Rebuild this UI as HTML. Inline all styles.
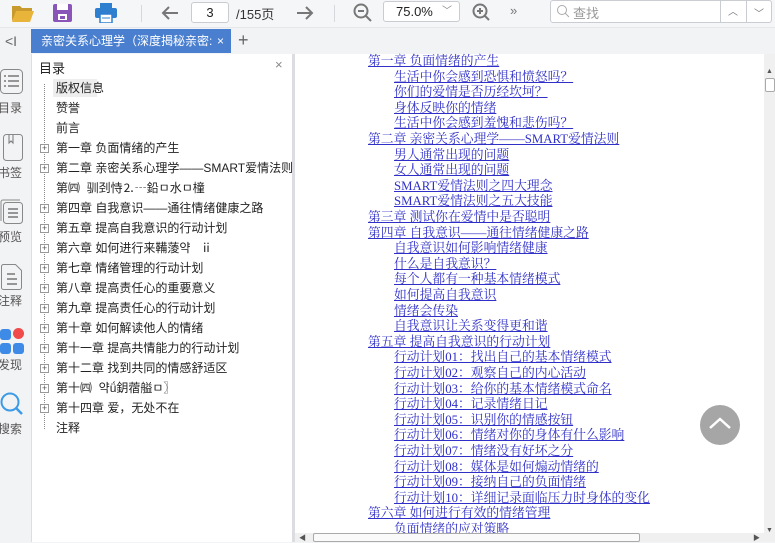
<!DOCTYPE html>
<html><head><meta charset="utf-8"><style>
*{margin:0;padding:0;box-sizing:border-box}
body{width:775px;height:542px;overflow:hidden;background:#f2f3f5;font-family:"Liberation Sans","Noto Sans CJK SC",sans-serif;position:relative;font-size:12px;color:#222}
.abs{position:absolute}
.toolbar{left:0;top:0;width:775px;height:27px;background:#f5f6f8}
.tabbar{left:0;top:27px;width:775px;height:27px;background:#f2f3f5;border-top:1px solid #e4e6ea}
.tab{left:31px;top:29px;width:200px;height:24px;background:#4a7fd0;color:#fff;font-size:12px;line-height:24px;padding-left:10px;white-space:nowrap;overflow:hidden}
.rail{left:0;top:54px;width:30px;height:488px;background:#f2f3f5}
.rail .lbl{position:absolute;left:-2px;font-size:12px;color:#555;white-space:nowrap}
.toc{left:31px;top:54px;width:261px;height:488px;background:#fff;border-left:1px solid #dcdee2}
.toc .it{position:absolute;left:24px;font-size:12px;color:#222;white-space:nowrap;line-height:16px}
.plus{position:absolute;left:8px;width:9px;height:9px;border:1px solid #999;font-size:9px;line-height:7px;text-align:center;color:#555;background:#fff}
.sep{left:292px;top:54px;width:3px;height:488px;background:#dcdde0}
.content{left:295px;top:54px;width:469px;height:479px;background:#fff}
.ln{position:absolute;font-family:"Liberation Serif","Noto Serif CJK SC",serif;font-size:12.8px;color:#3030c8;text-decoration:underline;white-space:nowrap;line-height:15px}
.vs{left:764px;top:54px;width:11px;height:488px;background:#f0f0f0}
.hs{left:295px;top:533px;width:469px;height:9px;background:#f0f0f0}
</style></head><body>
<div class="abs toolbar"></div>
<svg class="abs" style="left:11px;top:3px" width="24" height="20"><path d="M1 3h8l2 2h10v3H6L1 18z" fill="#c99a2e"/><path d="M5 8h18l-4 11H1z" fill="#e8b43a"/></svg>
<svg class="abs" style="left:53px;top:4px" width="19" height="18"><rect x="0" y="0" width="19" height="18" rx="2" fill="#8a55b8"/><rect x="4" y="0" width="11" height="6" fill="#fff"/><rect x="5" y="10" width="9" height="6" fill="#fff"/><rect x="7" y="12" width="5" height="3" fill="#8a55b8"/></svg>
<svg class="abs" style="left:95px;top:3px" width="22" height="20"><rect x="5" y="0" width="12" height="5" fill="#2f7fd0"/><rect x="0" y="5" width="22" height="10" rx="2" fill="#2f7fd0"/><rect x="5" y="11" width="12" height="9" fill="#fff" stroke="#2f7fd0" stroke-width="1.5"/><line x1="7" y1="15" x2="15" y2="15" stroke="#2f7fd0"/></svg>
<div class="abs" style="left:141px;top:5px;width:1px;height:17px;background:#d6d8dc"></div>
<svg class="abs" style="left:161px;top:5px" width="18" height="16"><path d="M17 8H2M8 2L2 8l6 6" stroke="#777" stroke-width="2" fill="none"/></svg>
<div class="abs" style="left:191px;top:2px;width:38px;height:21px;background:#fff;border:1px solid #c9ccd1;border-radius:3px;text-align:center;line-height:19px;font-size:13px">3</div>
<div class="abs" style="left:236px;top:4px;font-size:13px;color:#333">/155页</div>
<svg class="abs" style="left:296px;top:5px" width="18" height="16"><path d="M1 8h15M10 2l6 6-6 6" stroke="#777" stroke-width="2" fill="none"/></svg>
<div class="abs" style="left:334px;top:5px;width:1px;height:17px;background:#d6d8dc"></div>
<svg class="abs" style="left:353px;top:3px" width="20" height="20"><circle cx="8" cy="8" r="6.5" stroke="#777" stroke-width="2" fill="none"/><path d="M5 8h6M13 13l5 5" stroke="#777" stroke-width="2"/></svg>
<div class="abs" style="left:383px;top:1px;width:77px;height:21px;background:#fff;border:1px solid #c9ccd1;border-radius:3px;font-size:13px;line-height:19px;padding-left:12px">75.0%<span style="position:absolute;left:58px;color:#888;font-size:10px">﹀</span></div>
<svg class="abs" style="left:471px;top:2px" width="20" height="20"><circle cx="9" cy="9" r="6.5" stroke="#777" stroke-width="2" fill="none"/><path d="M6 9h6M9 6v6M14 14l4 4" stroke="#777" stroke-width="2"/></svg>
<div class="abs" style="left:510px;top:3px;color:#777;font-size:13px">»</div>
<div class="abs" style="left:550px;top:0px;width:222px;height:23px;background:#fff;border:1px solid #c9ccd1;border-radius:3px"></div>
<svg class="abs" style="left:556px;top:4px" width="14" height="14"><circle cx="6" cy="6" r="4.5" stroke="#aaa" fill="none"/><path d="M9 9l4 4" stroke="#aaa"/></svg>
<div class="abs" style="left:573px;top:3px;color:#999;font-size:13px">查找</div>
<div class="abs" style="left:720px;top:0;width:1px;height:23px;background:#c9ccd1"></div>
<div class="abs" style="left:746px;top:0;width:1px;height:23px;background:#c9ccd1"></div>
<div class="abs" style="left:728px;top:3px;color:#777;font-size:10px">︿</div>
<div class="abs" style="left:754px;top:5px;color:#777;font-size:10px">﹀</div>

<div class="abs tabbar"></div>
<div class="abs" style="left:5px;top:33px;color:#666;font-size:14px">&lt;I</div>
<div class="abs tab">亲密关系心理学（深度揭秘亲密:<span style="position:absolute;left:182px;top:0;background:#4a7fd0;padding:0 4px">×</span></div>
<div class="abs" style="left:238px;top:30px;color:#666;font-size:18px">+</div>

<div class="abs rail">
<svg class="abs" style="left:0px;top:15px" width="24" height="26"><rect x="0.5" y="0.5" width="22" height="24" rx="4" fill="none" stroke="#888"/><path d="M4 7h2M8 7h11M4 12h2M8 12h11M4 17h2M8 17h11" stroke="#777" stroke-width="1.5"/></svg>
<div class="lbl" style="top:45px">目录</div>
<svg class="abs" style="left:3px;top:80px" width="20" height="27"><rect x="0.5" y="0.5" width="19" height="26" rx="3" fill="none" stroke="#888"/><path d="M6 1v8l2-2 2 2V1" stroke="#777" fill="none"/></svg>
<div class="lbl" style="top:110px">书签</div>
<svg class="abs" style="left:0px;top:145px" width="24" height="26"><rect x="3.5" y="3.5" width="19" height="21" rx="3" fill="none" stroke="#888"/><path d="M1 22V3a2 2 0 012-2h17" stroke="#888" fill="none"/><path d="M8 10h10M8 14h10M8 18h10" stroke="#777" stroke-width="1.5"/></svg>
<div class="lbl" style="top:174px">预览</div>
<svg class="abs" style="left:1px;top:210px" width="22" height="26"><path d="M0.5 2.5a2 2 0 012-2h12l6 6v17a2 2 0 01-2 2h-16a2 2 0 01-2-2z" fill="none" stroke="#888"/><path d="M6 10h8M6 15h10M6 20h10" stroke="#777" stroke-width="1.5"/></svg>
<div class="lbl" style="top:238px">注释</div>
<div class="abs" style="left:0;top:275px;width:11px;height:11px;background:#3d8be6;border-radius:3px"></div>
<div class="abs" style="left:13px;top:274px;width:11px;height:11px;background:#f04a4a;border-radius:6px"></div>
<div class="abs" style="left:0;top:289px;width:11px;height:11px;background:#3d8be6;border-radius:3px"></div>
<div class="abs" style="left:13px;top:289px;width:11px;height:11px;background:#3d8be6;border-radius:3px"></div>
<div class="lbl" style="top:302px">发现</div>
<svg class="abs" style="left:0px;top:338px" width="24" height="24"><circle cx="10" cy="10" r="8.5" stroke="#3d9be6" stroke-width="2" fill="none"/><path d="M16 16l6 6" stroke="#3d9be6" stroke-width="2.5"/></svg>
<div class="lbl" style="top:366px">搜索</div>
</div>

<div class="abs toc">
<div class="abs" style="left:7px;top:4px;font-size:13px">目录</div>
<div class="abs" style="left:243px;top:3px;color:#888;font-size:13px">×</div>
<div class="abs" style="left:12px;top:30px;width:0;height:345px;border-left:1px dotted #888"></div>
<div class="abs" style="left:21px;top:25px;width:44px;height:18px;background:#eeeeee"></div>
<div class="it" style="top:26px">版权信息</div>
<div class="it" style="top:46px">赞誉</div>
<div class="it" style="top:66px">前言</div>
<div class="it" style="top:86px">第一章 负面情绪的产生</div>
<div class="it" style="top:106px">第二章 亲密关系心理学——SMART爱情法则</div>
<div class="it" style="top:126px">第㈣ &nbsp;驯刭恃⒉┄鉛ㅁ水ㅁ橦</div>
<div class="it" style="top:146px">第四章 自我意识——通往情绪健康之路</div>
<div class="it" style="top:166px">第五章 提高自我意识的行动计划</div>
<div class="it" style="top:186px">第六章 如何进行来鞴蔆약 &nbsp;&nbsp;ⅱ</div>
<div class="it" style="top:206px">第七章 情绪管理的行动计划</div>
<div class="it" style="top:226px">第八章 提高责任心的重要意义</div>
<div class="it" style="top:246px">第九章 提高责任心的行动计划</div>
<div class="it" style="top:266px">第十章 如何解读他人的情绪</div>
<div class="it" style="top:286px">第十一章 提高共情能力的行动计划</div>
<div class="it" style="top:306px">第十二章 找到共同的情感舒适区</div>
<div class="it" style="top:326px">第十㈣ &nbsp;약ǘ鈅蓿艗ㅁ〗</div>
<div class="it" style="top:346px">第十四章 爱，无处不在</div>
<div class="it" style="top:366px">注释</div>
<div class="plus" style="top:90px">+</div><div class="plus" style="top:110px">+</div>
<div class="plus" style="top:150px">+</div><div class="plus" style="top:170px">+</div><div class="plus" style="top:190px">+</div><div class="plus" style="top:210px">+</div><div class="plus" style="top:230px">+</div><div class="plus" style="top:250px">+</div><div class="plus" style="top:270px">+</div><div class="plus" style="top:290px">+</div><div class="plus" style="top:310px">+</div><div class="plus" style="top:330px">+</div><div class="plus" style="top:350px">+</div>
</div>
<div class="abs sep"></div>

<div class="abs content">
<div class="ln" style="left:73px;top:0px">第一章 负面情绪的产生</div>
<div class="ln" style="left:99px;top:15.6px">生活中你会感到恐惧和愤怒吗？</div>
<div class="ln" style="left:99px;top:31.2px">你们的爱情是否历经坎坷？</div>
<div class="ln" style="left:99px;top:46.8px">身体反映你的情绪</div>
<div class="ln" style="left:99px;top:62.4px">生活中你会感到羞愧和悲伤吗？</div>
<div class="ln" style="left:73px;top:78px">第二章 亲密关系心理学——SMART爱情法则</div>
<div class="ln" style="left:99px;top:93.6px">男人通常出现的问题</div>
<div class="ln" style="left:99px;top:109.2px">女人通常出现的问题</div>
<div class="ln" style="left:99px;top:124.8px">SMART爱情法则之四大理念</div>
<div class="ln" style="left:99px;top:140.4px">SMART爱情法则之五大技能</div>
<div class="ln" style="left:73px;top:156px">第三章 测试你在爱情中是否聪明</div>
<div class="ln" style="left:73px;top:171.6px">第四章 自我意识——通往情绪健康之路</div>
<div class="ln" style="left:99px;top:187.2px">自我意识如何影响情绪健康</div>
<div class="ln" style="left:99px;top:202.8px">什么是自我意识？</div>
<div class="ln" style="left:99px;top:218.4px">每个人都有一种基本情绪模式</div>
<div class="ln" style="left:99px;top:234px">如何提高自我意识</div>
<div class="ln" style="left:99px;top:249.6px">情绪会传染</div>
<div class="ln" style="left:99px;top:265.2px">自我意识让关系变得更和谐</div>
<div class="ln" style="left:73px;top:280.8px">第五章 提高自我意识的行动计划</div>
<div class="ln" style="left:99px;top:296.4px">行动计划01：找出自己的基本情绪模式</div>
<div class="ln" style="left:99px;top:312px">行动计划02：观察自己的内心活动</div>
<div class="ln" style="left:99px;top:327.6px">行动计划03：给你的基本情绪模式命名</div>
<div class="ln" style="left:99px;top:343.2px">行动计划04：记录情绪日记</div>
<div class="ln" style="left:99px;top:358.8px">行动计划05：识别你的情感按钮</div>
<div class="ln" style="left:99px;top:374.4px">行动计划06：情绪对你的身体有什么影响</div>
<div class="ln" style="left:99px;top:390px">行动计划07：情绪没有好坏之分</div>
<div class="ln" style="left:99px;top:405.6px">行动计划08：媒体是如何煽动情绪的</div>
<div class="ln" style="left:99px;top:421.2px">行动计划09：接纳自己的负面情绪</div>
<div class="ln" style="left:99px;top:436.8px">行动计划10：详细记录面临压力时身体的变化</div>
<div class="ln" style="left:73px;top:452.4px">第六章 如何进行有效的情绪管理</div>
<div class="ln" style="left:99px;top:468px">负面情绪的应对策略</div>
<div class="abs" style="left:405px;top:351px;width:40px;height:40px;border-radius:20px;background:#a6a6a6"></div>
<svg class="abs" style="left:412px;top:361px" width="26" height="16"><path d="M3 13L13 4l10 9" stroke="#fff" stroke-width="2.5" fill="none"/></svg>
</div>

<div class="abs vs"><div class="abs" style="left:2px;top:14px;font-size:7px;color:#555">▲</div><div class="abs" style="left:1px;top:24px;width:10px;height:14px;background:#fff;border:1px solid #aaa;border-radius:2px"></div><div class="abs" style="left:2px;top:473px;font-size:7px;color:#555">▼</div></div>
<div class="abs hs"><div class="abs" style="left:18px;top:0;width:327px;height:9px;background:#fafafa;border:1px solid #aaa;border-radius:2px"></div><div class="abs" style="left:4px;top:0;font-size:7px;color:#555">◀</div><div class="abs" style="left:458px;top:0;font-size:7px;color:#555">▶</div></div>
</body></html>
